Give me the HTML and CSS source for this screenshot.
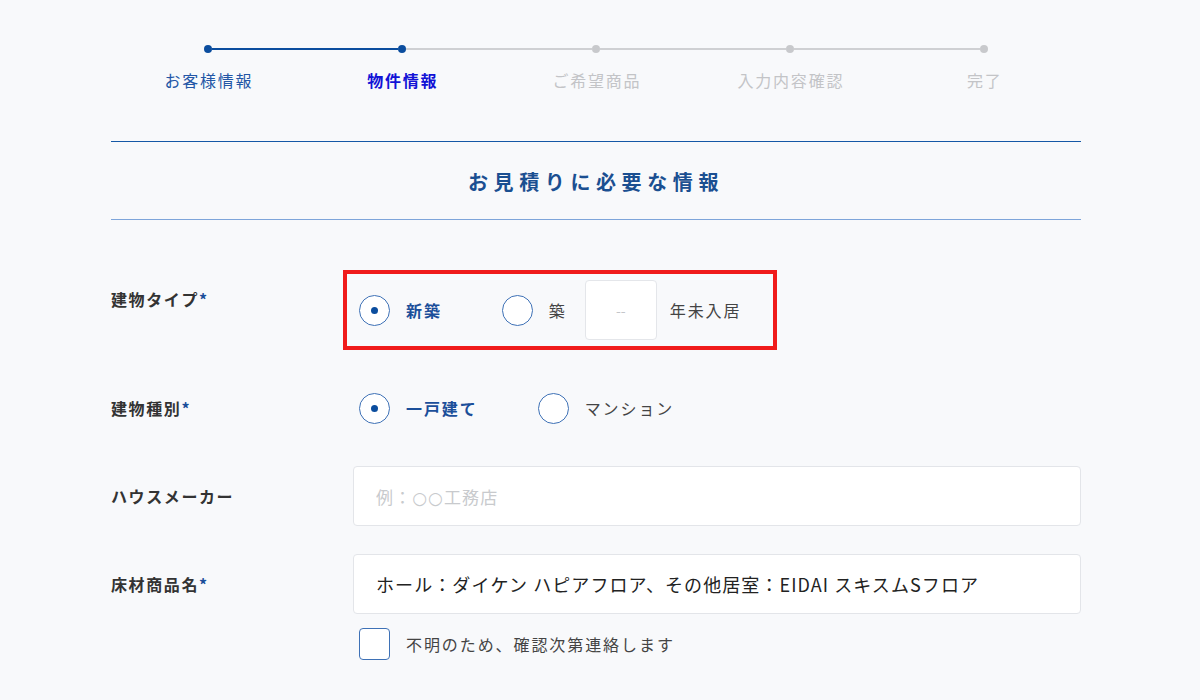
FILE: index.html
```html
<!DOCTYPE html>
<html lang="ja">
<head>
  <meta charset="utf-8">
  <meta name="viewport" content="width=device-width, initial-scale=1.0">
  <title>お見積り依頼 - 物件情報</title>
  <link rel="stylesheet" href="styles.css">
</head>
<body>
  <div class="page">

    <!-- ステップ表示 -->
    <div class="steps">
      <div class="steps-track">
        <span class="dot done"></span>
        <span class="bar done"></span>
        <span class="dot done"></span>
        <span class="bar"></span>
        <span class="dot"></span>
        <span class="bar"></span>
        <span class="dot"></span>
        <span class="bar"></span>
        <span class="dot"></span>
      </div>
      <ol class="steps-labels">
        <li class="done">お客様情報</li>
        <li class="current">物件情報</li>
        <li>ご希望商品</li>
        <li>入力内容確認</li>
        <li>完了</li>
      </ol>
    </div>

    <h2 class="section-title">お見積りに必要な情報</h2>

    <form class="form">
      <div class="row row-type">
        <div class="label">建物タイプ<span class="req">*</span></div>
        <div class="field">
          <div class="options highlight">
            <label class="opt">
              <input type="radio" name="type" checked>
              <span>新築</span>
            </label>
            <label class="opt">
              <input type="radio" name="type">
              <span>築</span>
            </label>
            <input class="years" type="text" placeholder="--">
            <span class="suffix">年未入居</span>
          </div>
        </div>
      </div>

      <div class="row">
        <div class="label">建物種別<span class="req">*</span></div>
        <div class="field">
          <div class="options">
            <label class="opt">
              <input type="radio" name="kind" checked>
              <span>一戸建て</span>
            </label>
            <label class="opt">
              <input type="radio" name="kind">
              <span>マンション</span>
            </label>
          </div>
        </div>
      </div>

      <div class="row">
        <div class="label">ハウスメーカー</div>
        <div class="field">
          <input class="text" type="text" placeholder="例：○○工務店">
        </div>
      </div>

      <div class="row">
        <div class="label">床材商品名<span class="req">*</span></div>
        <div class="field">
          <input class="text" type="text" value="ホール：ダイケン ハピアフロア、その他居室：EIDAI スキスムSフロア">
          <label class="check">
            <input type="checkbox">
            <span>不明のため、確認次第連絡します</span>
          </label>
        </div>
      </div>
    </form>

  </div>
</body>
</html>
```

FILE: styles.css
```css
body {
  margin: 0;
  padding-right: 8px;
  background: #f8f9fb;
  color: #333;
  font-family: "Noto Sans CJK JP", "Noto Sans", sans-serif;
}

.page {
  width: 970px;
  margin: 0 auto;
  padding-top: 45px;
}

/* steps */
.steps-track {
  display: flex;
  align-items: center;
  padding: 0 93px;
  height: 8px;
}

.dot {
  width: 8px;
  height: 8px;
  border-radius: 50%;
  background: #c8c9cc;
  flex: none;
}

.dot.done {
  background: #0b4d9e;
}

.bar {
  flex: 1;
  height: 2px;
  background: #cfd0d3;
}

.bar.done {
  background: #0b4d9e;
}

.steps-labels {
  list-style: none;
  margin: 15px 0 0;
  padding: 0;
  display: grid;
  grid-template-columns: repeat(5, 1fr);
  text-align: center;
  font-size: 16px;
  line-height: 24px;
  letter-spacing: 0.11em;
  color: #c3c4c7;
}

.steps-labels li {
  padding-left: 0.11em;
}

.steps-labels .done {
  color: #2356a6;
}

.steps-labels .current {
  color: #1212d6;
  font-weight: bold;
}

/* section heading */
.section-title {
  margin: 49px 0 0;
  padding: 25px 0 22px;
  border-top: 1px solid #1558a6;
  border-bottom: 1px solid #7ea5da;
  text-align: center;
  font-size: 20px;
  line-height: 30px;
  font-weight: bold;
  letter-spacing: 0.28em;
  color: #1b4f91;
}

/* form rows */
.form {
  padding-top: 60px;
}

.row {
  display: flex;
  align-items: flex-start;
  margin-bottom: 28px;
}

.row-type {
  margin-bottom: 38px;
}

.label {
  width: 242px;
  flex: none;
  font-size: 16px;
  line-height: 60px;
  font-weight: bold;
  letter-spacing: 0.1em;
  color: #333;
}

.row-type .label {
  line-height: 38px;
}

.req {
  color: #1b4f9a;
}

.field {
  flex: 1;
}

/* radio options */
.options {
  display: inline-flex;
  align-items: center;
  height: 60px;
  padding-left: 6px;
}

.options.highlight {
  padding-right: 26px;
  outline: 4px solid #f01b1b;
  outline-offset: 6px;
}

.opt {
  display: inline-flex;
  align-items: center;
  gap: 16px;
  margin-right: 60px;
  font-size: 16px;
  letter-spacing: 0.12em;
  color: #444;
  cursor: pointer;
}

.row-type .opt + .opt {
  margin-right: 18px;
}

.opt input {
  appearance: none;
  -webkit-appearance: none;
  margin: 0;
  width: 31px;
  height: 31px;
  border: 1.5px solid #3e71b6;
  border-radius: 50%;
  background: #fff;
  display: grid;
  place-items: center;
}

.opt input:checked::after {
  content: "";
  width: 7px;
  height: 7px;
  border-radius: 50%;
  background: #0b4d9e;
}

.opt input:checked + span {
  color: #1b4f9a;
  font-weight: bold;
}

.years {
  width: 72px;
  height: 60px;
  box-sizing: border-box;
  border: 1px solid #e4e6ea;
  border-radius: 4px;
  background: #fff;
  text-align: center;
  font-family: inherit;
  font-size: 14px;
  margin-right: 13px;
}

.years::placeholder {
  color: #c4c6ca;
}

.suffix {
  font-size: 16px;
  letter-spacing: 0.12em;
  color: #444;
}

/* text inputs */
.text {
  display: block;
  width: 100%;
  height: 60px;
  box-sizing: border-box;
  padding: 0 22px;
  border: 1px solid #e3e5e9;
  border-radius: 4px;
  background: #fff;
  font-family: inherit;
  font-size: 18px;
  letter-spacing: 0.06em;
  color: #222;
}

.text::placeholder {
  color: #c8cacd;
  font-family: "DejaVu Sans", "Noto Sans CJK JP", sans-serif;
  font-size: 17px;
}

.check {
  display: inline-flex;
  align-items: center;
  gap: 16px;
  margin: 14px 0 0 6px;
  font-size: 16px;
  letter-spacing: 0.12em;
  color: #444;
}

.check input {
  appearance: none;
  -webkit-appearance: none;
  margin: 0;
  width: 31px;
  height: 32px;
  border: 1.5px solid #3e71b6;
  border-radius: 4px;
  background: #fff;
}
```
